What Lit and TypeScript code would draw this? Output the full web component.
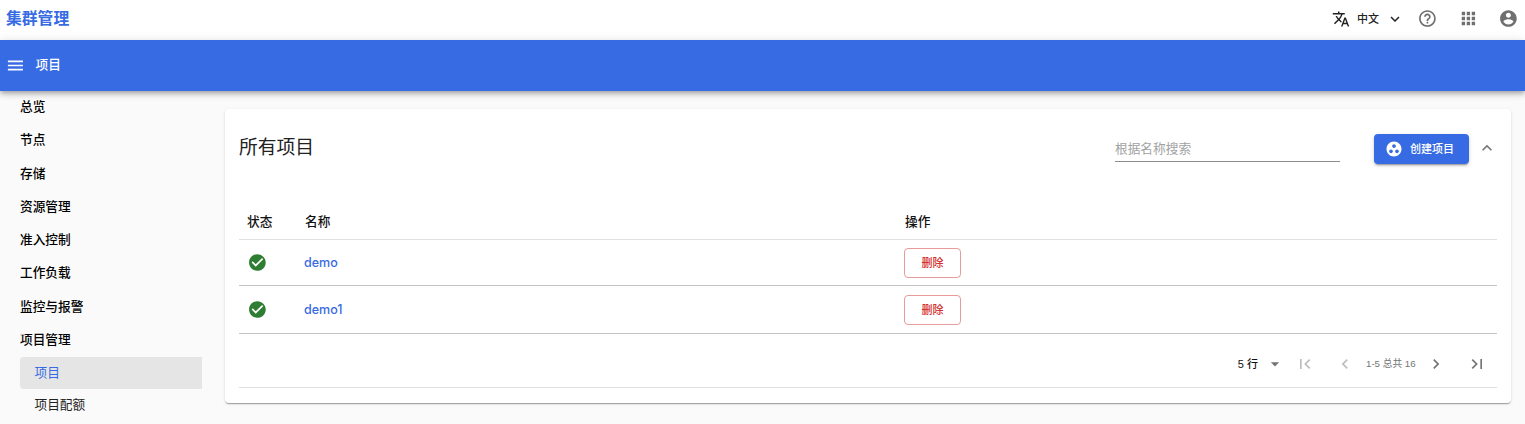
import { LitElement, html, css, svg } from "lit";
import { customElement, property } from "lit/decorators.js";

const ICONS: Record<string, string> = {
  translate: "M12.87 15.07l-2.54-2.51.03-.03c1.74-1.94 2.98-4.17 3.71-6.53H17V4h-7V2H8v2H1v1.99h11.17C11.5 7.92 10.44 9.75 9 11.35 8.07 10.32 7.3 9.19 6.69 8h-2c.73 1.63 1.73 3.17 2.98 4.56l-5.09 5.02L4 19l5-5 3.11 3.11.76-2.04zM18.5 10h-2L12 22h2l1.12-3h4.75L21 22h2l-4.5-12zm-2.62 7l1.62-4.33L19.12 17h-3.24z",
  down: "M16.59 8.59L12 13.17 7.41 8.59 6 10l6 6 6-6z",
  up: "M12 8l-6 6 1.41 1.41L12 10.83l4.59 4.58L18 14z",
  help: "M11 18h2v-2h-2v2zm1-16C6.48 2 2 6.48 2 12s4.48 10 10 10 10-4.48 10-10S17.52 2 12 2zm0 18c-4.41 0-8-3.59-8-8s3.59-8 8-8 8 3.59 8 8-3.59 8-8 8zm0-14c-2.21 0-4 1.79-4 4h2c0-1.1.9-2 2-2s2 .9 2 2c0 2-3 1.75-3 5h2c0-2.25 3-2.5 3-5 0-2.21-1.79-4-4-4z",
  apps: "M4 8h4V4H4v4zm6 12h4v-4h-4v4zm-6 0h4v-4H4v4zm0-6h4v-4H4v4zm6 0h4v-4h-4v4zm6-10v4h4V4h-4zm-6 4h4V4h-4v4zm6 6h4v-4h-4v4zm0 6h4v-4h-4v4z",
  account: "M12 2C6.48 2 2 6.48 2 12s4.48 10 10 10 10-4.48 10-10S17.52 2 12 2zm0 3c1.66 0 3 1.34 3 3s-1.34 3-3 3-3-1.34-3-3 1.34-3 3-3zm0 14.2c-2.5 0-4.71-1.28-6-3.22.03-1.99 4-3.08 6-3.08 1.99 0 5.97 1.09 6 3.08-1.29 1.94-3.5 3.22-6 3.22z",
  menu: "M3 18h18v-2H3v2zm0-5h18v-2H3v2zm0-7v2h18V6H3z",
  group: "M12 2C6.48 2 2 6.48 2 12s4.48 10 10 10 10-4.48 10-10S17.52 2 12 2zM8 17.5c-1.38 0-2.5-1.12-2.5-2.5s1.12-2.5 2.5-2.5 2.5 1.12 2.5 2.5-1.12 2.5-2.5 2.5zM9.5 8c0-1.38 1.12-2.5 2.5-2.5s2.5 1.12 2.5 2.5-1.12 2.5-2.5 2.5S9.5 9.38 9.5 8zm6.5 9.5c-1.38 0-2.5-1.12-2.5-2.5s1.12-2.5 2.5-2.5 2.5 1.12 2.5 2.5-1.12 2.5-2.5 2.5z",
  check: "M12 2C6.48 2 2 6.48 2 12s4.48 10 10 10 10-4.48 10-10S17.52 2 12 2zm-2 15l-5-5 1.41-1.41L10 14.17l7.59-7.59L19 8l-9 9z",
  caret: "M7 10l5 5 5-5z",
  first: "M18.41 16.59L13.82 12l4.59-4.59L17 6l-6 6 6 6zM6 6h2v12H6z",
  prev: "M15.41 7.41L14 6l-6 6 6 6 1.41-1.41L10.83 12z",
  next: "M10 6L8.59 7.41 13.17 12l-4.58 4.59L10 18l6-6z",
  last: "M5.59 7.41L10.18 12l-4.59 4.59L7 18l6-6-6-6zM16 6h2v12h-2z",
};

@customElement("ui-icon")
class UiIcon extends LitElement {
  @property() name = "";
  static styles = css`
    :host { display: block; flex: none; width: 20px; height: 20px; }
    .glyph { display: block; width: 100%; height: 100%; fill: currentColor; overflow: visible; }
    .half { transform: translate(0.4px, -0.5px); }
  `;
  render() {
    const half = ["help", "apps", "account", "check", "menu"].includes(this.name);
    return html`<svg class="glyph ${half ? "half" : ""}" viewBox="0 0 24 24">${svg`<path d=${ICONS[this.name]}></path>`}</svg>`;
  }
}

@customElement("app-root")
class AppRoot extends LitElement {
  private menu = ["总览", "节点", "存储", "资源管理", "准入控制", "工作负载", "监控与报警", "项目管理"];
  private projects = ["demo", "demo1"];

  static styles = css`
    :host {
      display: flex; flex-direction: column; height: 424px; overflow: hidden;
      background: #fafafa; color: #000;
      font: 12.7px/18px "Liberation Sans", "Noto Sans CJK SC", sans-serif;
    }
    * { box-sizing: border-box; }
    .top {
      display: flex; align-items: center; justify-content: space-between;
      height: 40px; flex: none; padding: 0 7px 3px 6px; background: #fff;
    }
    .brand { color: #376be3; font-size: 15.8px; font-weight: 700; }
    .tools { display: flex; align-items: center; color: #6f6f6f; }
    .lang { display: flex; align-items: center; color: #222; font-size: 11px; font-weight: 500; margin-right: 13px; }
    .lang-icon { width: 18px; height: 18px; margin-top: 1px; }
    .lang-text { margin: 1px 7px 0 7px; }
    .lang-down { width: 18px; height: 18px; margin-top: 1px; }
    .help { margin-right: 21px; }
    .apps { margin-right: 20px; }
    .bar {
      position: relative; display: flex; align-items: center; gap: 10.5px;
      height: 51px; flex: none; padding-left: 5px; background: #376be3; color: #fff;
      font-weight: 500;
      box-shadow: 0 2px 4px -1px rgba(0,0,0,.2), 0 4px 5px rgba(0,0,0,.14), 0 1px 10px rgba(0,0,0,.12);
    }
    .bar-title { margin-top: -2px; }
    .body { display: flex; flex: 1; min-height: 0; }
    .side { width: 225px; flex: none; padding: 0 23px 0 20px; }
    .item { height: 33.25px; line-height: 32px; font-weight: 500; }
    .sub { height: 32px; line-height: 33px; padding-left: 14.5px; color: #222; border-radius: 4px 0 0 4px; }
    .sub.active { background: #e5e5e5; color: #376be3; }
    .card {
      flex: 1; height: 294px; margin: 18px 14px 0 0; padding: 0 14px; background: #fff; border-radius: 4px;
      box-shadow: 0 2px 1px -1px rgba(0,0,0,.2), 0 1px 1px rgba(0,0,0,.14), 0 1px 3px rgba(0,0,0,.12);
    }
    .head { display: flex; align-items: flex-start; height: 95px; padding-top: 25px; }
    .title { flex: 1; font-size: 18.8px; line-height: 28px; color: #222; }
    .search { width: 225px; height: 28px; border-bottom: 1px solid #8c8c8c; line-height: 31px; color: #a2a2a2; }
    .create {
      display: flex; align-items: center; gap: 7px; width: 95px; height: 30px; margin: 0 8px 0 34px; padding-left: 11px;
      border: 0; border-radius: 4px; background: #376be3; color: #fff; font: inherit; font-size: 11px; font-weight: 500; white-space: nowrap;
      box-shadow: 0 3px 1px -2px rgba(0,0,0,.2), 0 2px 2px rgba(0,0,0,.14), 0 1px 5px rgba(0,0,0,.12);
    }
    .create-icon { width: 18px; height: 18px; }
    .collapse { margin: 4px 0 0; color: #757575; }
    .row { display: grid; grid-template-columns: 65px 600px 1fr; align-items: center; border-bottom: 1px solid #c4c4c4; height: 48px; }
    .row.short { height: 46px; }
    .row.header { height: 36px; border-color: #e0e0e0; font-weight: 500; color: #111; }
    .th { padding-left: 8px; }
    .th.near { padding-left: 1px; }
    .ok { margin-left: 8px; color: #2e7d32; }
    .name { color: #376be3; font-family: Inter, sans-serif; font-size: 12.5px; font-weight: 500; margin-top: 1px; }
    .delete {
      display: block; width: 57px; height: 30px; padding: 0; border: 1px solid #e99a9a; border-radius: 4px; background: #fff;
      color: #d32f2f; font: inherit; font-size: 11px; font-weight: 500;
    }
    .pager { display: flex; align-items: center; height: 54px; padding: 6px 10px 0 0; border-bottom: 1px solid #e0e0e0; justify-content: flex-end; color: #757575; }
    .rows { color: #111; font-size: 11px; font-weight: 500; margin-right: 7px; }
    .dim { color: #bdbdbd; }
    .range { width: 50px; font-size: 9.7px; margin: 0 10px 0 11px; white-space: nowrap; }
    .gap { margin: 0 20px 0 10px; }
    .last { margin-left: 21px; }
  `;

  render() {
    return html`
      <header class="top">
        <div class="brand">集群管理</div>
        <div class="tools">
          <div class="lang">
            <ui-icon class="lang-icon" name="translate"></ui-icon>
            <span class="lang-text">中文</span>
            <ui-icon class="lang-down" name="down"></ui-icon>
          </div>
          <ui-icon class="help" name="help"></ui-icon>
          <ui-icon class="apps" name="apps"></ui-icon>
          <ui-icon name="account"></ui-icon>
        </div>
      </header>
      <div class="bar"><ui-icon name="menu"></ui-icon><span class="bar-title">项目</span></div>
      <div class="body">
        <nav class="side">
          ${this.menu.map((m) => html`<div class="item">${m}</div>`)}
          <div class="sub active">项目</div>
          <div class="sub">项目配额</div>
        </nav>
        <main class="card">
          <div class="head">
            <div class="title">所有项目</div>
            <div class="search">根据名称搜索</div>
            <button class="create"><ui-icon class="create-icon" name="group"></ui-icon><span>创建项目</span></button>
            <ui-icon class="collapse" name="up"></ui-icon>
          </div>
          <div class="row header">
            <span class="th">状态</span><span class="th near">名称</span><span class="th near">操作</span>
          </div>
          ${this.projects.map((p, i) => html`
            <div class="row ${i === 0 ? "short" : ""}">
              <ui-icon class="ok" name="check"></ui-icon>
              <span class="name">${p}</span>
              <button class="delete">删除</button>
            </div>`)}
          <div class="pager">
            <span class="rows">5 行</span>
            <ui-icon name="caret"></ui-icon>
            <ui-icon class="dim gap" name="first"></ui-icon>
            <ui-icon class="dim" name="prev"></ui-icon>
            <span class="range">1-5 总共 16</span>
            <ui-icon name="next"></ui-icon>
            <ui-icon class="last" name="last"></ui-icon>
          </div>
        </main>
      </div>`;
  }
}
